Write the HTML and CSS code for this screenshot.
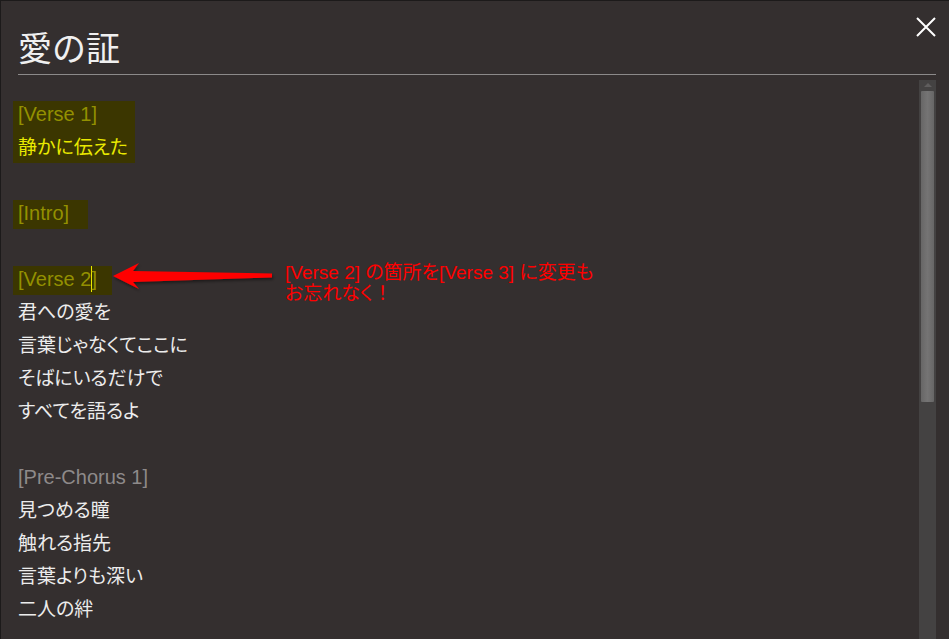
FILE: index.html
```html
<!doctype html>
<html lang="ja">
<head>
  <meta charset="utf-8" />
  <meta name="viewport" content="width=device-width,initial-scale=1" />
  <title>愛の証</title>
  <link rel="stylesheet" href="styles.css">
</head>
<body>
  <div class="modal" role="dialog" aria-label="愛の証">
    <header class="modal-head">
      <h1>愛の証</h1>
      <button class="close" aria-label="閉じる">
        <svg width="20" height="20" viewBox="0 0 20 20"><path d="M1 1L19 19M19 1L1 19" stroke="#fff" stroke-width="2" fill="none"/></svg>
      </button>
    </header>

    <div class="modal-body">
      <div class="lyrics">
        <div class="hl v1">
          <div class="line tag">[Verse 1]</div>
          <div class="line lit">静かに伝えた</div>
        </div>
        <div class="line"></div>
        <div class="hl trail-a">
          <div class="line tag">[Intro]</div>
        </div>
        <div class="line"></div>
        <div class="hl trail-b">
          <div class="line tag">[Verse 2<span class="caret"></span>]</div>
        </div>
        <div class="line">君への愛を</div>
        <div class="line">言葉じゃなくてここに</div>
        <div class="line">そばにいるだけで</div>
        <div class="line">すべてを語るよ</div>
        <div class="line"></div>
        <div class="line tag dim">[Pre-Chorus 1]</div>
        <div class="line">見つめる瞳</div>
        <div class="line">触れる指先</div>
        <div class="line">言葉よりも深い</div>
        <div class="line">二人の絆</div>

        <div class="note">[Verse 2] の箇所を[Verse 3] に変更も<br>お忘れなく<span class="full">！</span></div>
      </div>

      <div class="scrollbar">
        <div class="scroll-up"></div>
        <div class="thumb"></div>
      </div>
    </div>

    <svg class="arrow" width="949" height="639" viewBox="1 1 949 639">
      <defs>
        <filter id="shade" x="-10%" y="-50%" width="120%" height="200%">
          <feDropShadow dx="1" dy="2" stdDeviation="1.5" flood-color="#000" flood-opacity="0.45"/>
        </filter>
      </defs>
      <polygon filter="url(#shade)" fill="#ff0000"
        points="114,277 140,264 134,272 273,274.5 273,278.5 134,283 140,290"/>
    </svg>
  </div>
</body>
</html>
```

FILE: styles.css
```css
*{box-sizing:border-box}
html,body{height:100%}
body{
  margin:0;
  padding:1px 0 0 1px;
  background:#1c1a1a;
  overflow:hidden;
  font-family:"Liberation Sans","Noto Sans CJK JP",Arial,sans-serif;
  color:#ececec;
}

.modal{
  position:relative;
  height:638px;
  background:#342f2f;
  display:flex;
  flex-direction:column;
}

.modal-head{
  margin:0 13px 0 17px;
  height:74px;
  border-bottom:1px solid #8c8a8a;
  display:flex;
  align-items:flex-start;
  justify-content:space-between;
}
.modal-head h1{
  margin:30px 0 0 0;
  font-size:34px;
  line-height:36px;
  font-weight:400;
  color:#f0f0f0;
}
.close{
  appearance:none;
  border:0;
  background:none;
  padding:0;
  margin-top:16px;
  width:20px;
  height:20px;
  cursor:pointer;
}
.close svg{display:block}

.modal-body{
  flex:1;
  display:flex;
  overflow:hidden;
}

.lyrics{
  position:relative;
  flex:1;
  padding:23px 0 0 17px;
  font-size:19px;
  font-feature-settings:"palt";
}
.line{
  height:33px;
  line-height:33px;
  white-space:nowrap;
}
.tag{color:#939000;font-size:20px}
.tag.dim{color:#8e8a8a}
.lit{color:#e9e900}

.hl{
  width:fit-content;
  margin-left:-5px;
  padding-left:5px;
  background:linear-gradient(#3b3600,#3b3600) no-repeat;
  background-position:0 3px;
  background-size:100% calc(100% - 4px);
}
.hl.v1{width:122px}
.trail-a{padding-right:19px}
.trail-b{padding-right:15px}

.caret{
  display:inline-block;
  width:1px;
  height:26px;
  margin:0 -1px 0 0;
  vertical-align:-6px;
  background:#e8e800;
}

.note{
  position:absolute;
  left:284px;
  top:187px;
  font-size:19px;
  line-height:21px;
  color:#ff0000;
  white-space:nowrap;
}
.note .full{font-feature-settings:normal}

.scrollbar{
  width:17px;
  margin:5px 13px 0 0;
  background:#444242;
  display:flex;
  flex-direction:column;
  align-items:center;
}
.scroll-up{
  margin-top:3px;
  width:0;
  height:0;
  border-left:4px solid transparent;
  border-right:4px solid transparent;
  border-bottom:4px solid #5f5d5d;
}
.thumb{
  margin-top:4px;
  width:13px;
  height:311px;
  border-radius:1px;
  background:linear-gradient(90deg,#676666,#757474 50%,#676666);
}

.arrow{
  position:absolute;
  left:-1px;
  top:-1px;
  pointer-events:none;
}
```
